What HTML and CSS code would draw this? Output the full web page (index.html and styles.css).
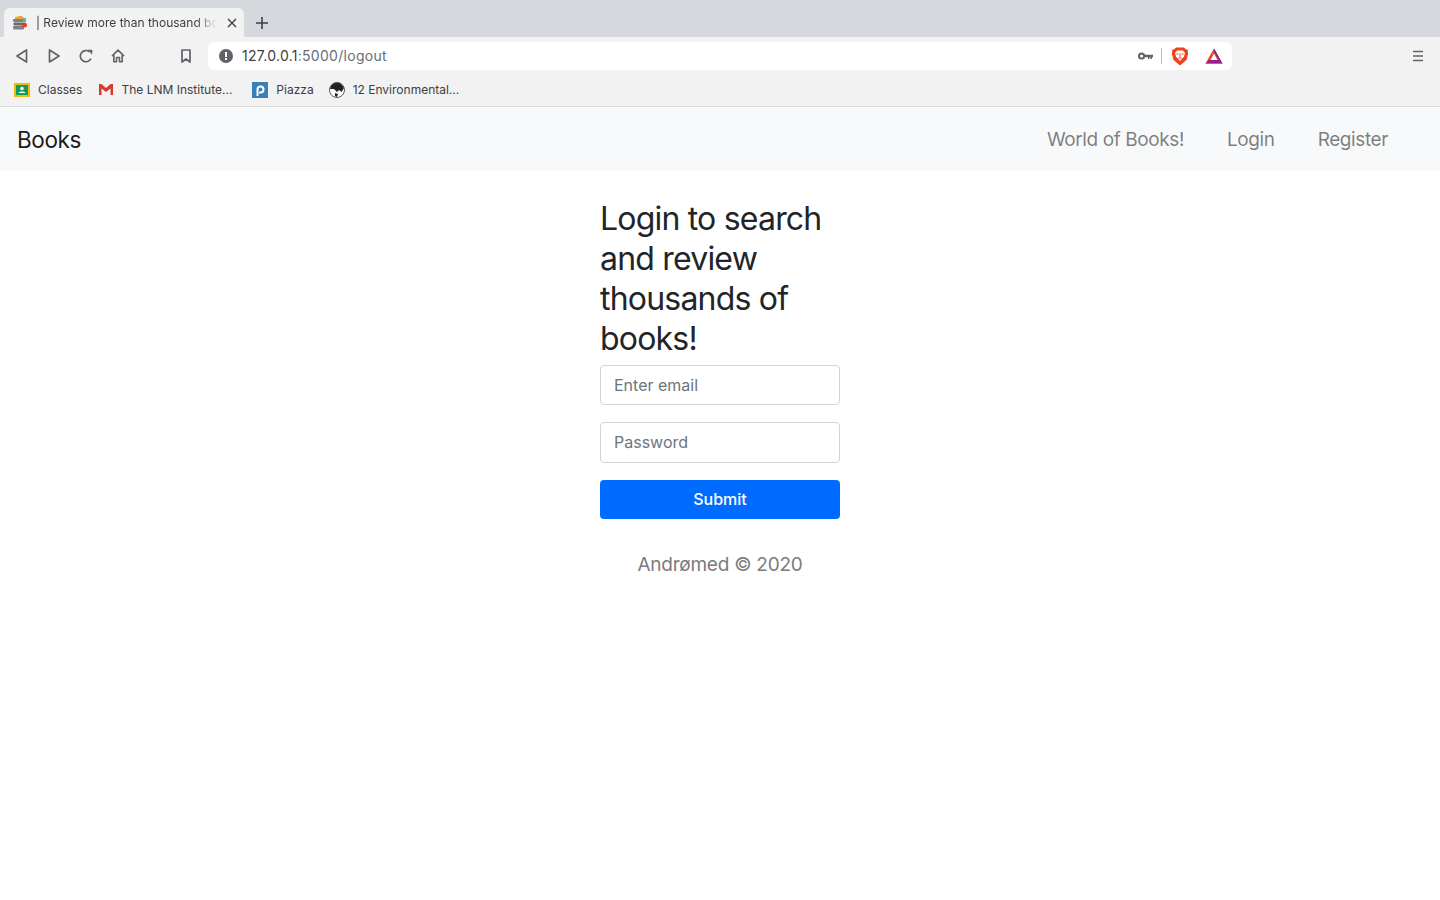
FILE: index.html
```html
<!DOCTYPE html>
<html lang="en">
<head>
<meta charset="utf-8">
<title>Review more than thousand books</title>
<link rel="stylesheet" href="styles.css">
</head>
<body>
<header class="chrome">
  <div class="tabstrip">
    <div class="tab">
      <svg class="favicon" width="16" height="16" viewBox="0 0 16 16">
        <path d="M3 2.500 Q5 .5 10 1 L12 3 L12 5 L3 5Z" fill="#e5a92c"/>
        <rect x="1" y="4" width="11" height="3" rx="1" fill="#7d8186"/>
        <rect x="1.500" y="7.500" width="11" height="3" rx="1" fill="#65696e"/>
        <rect x="1" y="11" width="11" height="3.500" rx="1" fill="#7d8186"/>
        <rect x="11" y="3" width="3" height="4" fill="#4fb6cf"/>
        <circle cx="12.500" cy="10" r="2.500" fill="#e8412a"/>
      </svg>
      <span class="tab-title">| Review more than thousand books</span>
      <svg class="tab-close" width="10" height="10" viewBox="0 0 10 10"><path d="M1 1 9 9M9 1 1 9" stroke="#3c4043" stroke-width="1.400" fill="none"/></svg>
    </div>
    <svg class="new-tab" width="12" height="12" viewBox="0 0 12 12"><path d="M6 0V12M0 6H12" stroke="#3c4043" stroke-width="1.600" fill="none"/></svg>
  </div>
  <div class="toolbar">
    <div class="nav-icons">
      <svg width="14" height="14" viewBox="0 0 14 14"><path d="M11.500 1V13L2 7Z" fill="none" stroke="#5f6368" stroke-width="1.700" stroke-linejoin="round"/></svg>
      <svg width="14" height="14" viewBox="0 0 14 14"><path d="M2.500 1V13L12 7Z" fill="none" stroke="#5f6368" stroke-width="1.700" stroke-linejoin="round"/></svg>
      <svg width="14" height="14" viewBox="0 0 14 14"><path d="M12 9.500A5.600 5.600 0 1 1 10.500 2.800" fill="none" stroke="#5f6368" stroke-width="1.700"/><path d="M9 .5 13.500 1 13 5.800Z" fill="#5f6368"/></svg>
      <svg width="14" height="14" viewBox="0 0 14 14"><path d="M1 7 7 1.200 13 7M2.800 5.500V12.800H5.500V8.500H8.500V12.800H11.200V5.500" fill="none" stroke="#5f6368" stroke-width="1.600" stroke-linejoin="round"/></svg>
    </div>
    <svg class="bookmark" width="12" height="14" viewBox="0 0 12 14"><path d="M2 1H10V13L6 10 2 13Z" fill="none" stroke="#5f6368" stroke-width="1.700" stroke-linejoin="round"/></svg>
    <div class="omnibox">
      <svg class="info" width="14" height="14" viewBox="0 0 14 14"><circle cx="7" cy="7" r="7" fill="#5f6368"/><rect x="6" y="3" width="2" height="5" fill="#fff"/><rect x="6" y="9" width="2" height="2" fill="#fff"/></svg>
      <span class="url"><span class="url-host">127.0.0.1</span>:5000/logout</span>
      <svg class="key" width="15" height="8" viewBox="0 0 15 8"><circle cx="3.600" cy="4" r="2.600" fill="none" stroke="#5f6368" stroke-width="2"/><path d="M6 2.800H15V5.200H14V7H12.500V5.200H11.500V7H10V5.200H6Z" fill="#5f6368"/></svg>
      <span class="omni-sep"></span>
      <svg class="brave" width="18" height="19" viewBox="0 0 18 19"><path d="M5 .5H13L14.500 2 17 3 16.800 5 17.200 6.500 15.500 13 9 18.500 2.500 13 .8 6.500 1.200 5 1 3 3.500 2Z" fill="#f1401d"/><path d="M6 3.500H12L14 6 13 9.500 9 14 5 9.500 4 6Z" fill="#fff"/><path d="M5.500 7H7.500M10.500 7H12.500M9 6.500V10M7.500 11H10.500" stroke="#f1401d" stroke-width="1" fill="none"/></svg>
      <svg class="bat" width="18" height="16" viewBox="0 0 18 16"><path d="M9 .5 17.500 15.500H.5Z" fill="#f1401d"/><path d="M.5 15.500 4 12H14L17.500 15.500Z" fill="#9e1f87"/><path d="M9 .5 17.500 15.500 14 12 9 4Z" fill="#662d91"/><path d="M9 5.500 12.500 12H5.500Z" fill="#fff"/></svg>
    </div>
    <svg class="menu" width="10" height="12" viewBox="0 0 10 12"><path d="M0 1.500H10M0 6H10M0 10.500H10" stroke="#5f6368" stroke-width="1.500" fill="none"/></svg>
  </div>
  <nav class="bookmarks">
    <a class="bm bm-classes">
      <svg width="16" height="14" viewBox="0 0 16 14"><rect width="16" height="14" fill="#f5b90d"/><rect x="2" y="2" width="12" height="10" fill="#0f9d58"/><circle cx="8" cy="5.500" r="1.800" fill="#fff"/><path d="M4.500 10C5 8 11 8 11.500 10Z" fill="#fff"/></svg>
      Classes
    </a>
    <a class="bm bm-gmail">
      <svg width="14" height="11" viewBox="0 0 14 11"><path d="M0 0H2.500L7 4 11.500 0H14V11H11.500V4.500L7 8 2.500 4.500V11H0Z" fill="#d93a2f"/></svg>
      The LNM Institute...
    </a>
    <a class="bm bm-piazza">
      <svg width="16" height="16" viewBox="0 0 16 16"><rect width="16" height="16" fill="#3a7fb8"/><path d="M5.500 14V7.500A3 3 0 1 1 8.500 10.500H7" fill="none" stroke="#fff" stroke-width="2"/></svg>
      Piazza
    </a>
    <a class="bm bm-env">
      <svg width="16" height="16" viewBox="0 0 16 16"><circle cx="8" cy="8" r="8" fill="#fff"/><path d="M4 1.500C6 .2 10 .2 12 1.500L15 6 12.500 10 10 8 8 10 5 7 1 7C1.500 4.500 2.500 2.500 4 1.500ZM6 11 9 12 8 15 6 14Z" fill="#222"/><circle cx="8" cy="8" r="7.500" fill="none" stroke="#555" stroke-width="1"/></svg>
      12 Environmental...
    </a>
  </nav>
</header>
<nav class="navbar">
  <a class="brand">Books</a>
  <ul class="nav-links">
    <li class="nav-link">World of Books!</li>
    <li class="nav-link">Login</li>
    <li class="nav-link">Register</li>
  </ul>
</nav>
<main class="login">
  <h1 class="login-title">Login to search and review thousands of books!</h1>
  <form class="login-form">
    <input class="field" type="email" placeholder="Enter email">
    <input class="field field-password" type="password" placeholder="Password">
    <button class="submit" type="button">Submit</button>
  </form>
  <p class="credit">Andrømed © 2020</p>
</main>
</body>
</html>
```
FILE: styles.css
```css
* { box-sizing: border-box; }
html, body { margin: 0; padding: 0; background: #fff; }
body { font-family: Inter, "Liberation Sans", sans-serif; color: #212529; height: 900px; overflow: hidden; }

.chrome { height: 107px; background: #f2f2f2; border-bottom: 1px solid #d8dade; font-family: Inter, Roboto, sans-serif; }
.tabstrip { height: 37px; background: #d5d8dd; display: flex; align-items: flex-end; padding-left: 4px; }
.tab { width: 240px; height: 29px; background: #f2f2f2; border-radius: 6px 6px 0 0; display: flex; align-items: center; padding: 0 7px 0 8px; }
.favicon { flex: none; }
.tab-title { margin-left: 8px; width: 182px; font-size: 12px; color: #3c4043; white-space: nowrap; overflow: hidden; -webkit-mask-image: linear-gradient(to right, #000 88%, transparent); mask-image: linear-gradient(to right, #000 88%, transparent); }
.tab-close { margin-left: 10px; flex: none; }
.new-tab { margin: 0 0 8px 12px; }

.toolbar { height: 38px; display: flex; align-items: center; padding-left: 15px; }
.nav-icons { display: flex; gap: 18px; width: 157px; }
.bookmark { flex: none; margin-left: 8px; }
.omnibox { width: 1024px; height: 28px; margin-left: 16px; background: #fff; border-radius: 6px; display: flex; align-items: center; padding-left: 11px; }
.info { flex: none; }
.url { margin: 0 0 2px 9px; font-size: 14px; letter-spacing: .28px; color: #6a6e73; flex: 1; }
.url-host { color: #3c4043; }
.key { flex: none; }
.omni-sep { width: 1px; height: 16px; background: #b9bbbe; margin-left: 8px; }
.brave { flex: none; margin-left: 9px; }
.bat { flex: none; margin: 0 9px 0 16px; }
.menu { flex: none; margin-left: 181px; }

.bookmarks { height: 31px; display: flex; align-items: center; padding: 0 0 2px 14px; font-size: 12px; color: #3c4043; }
.bm { display: flex; align-items: center; white-space: nowrap; }
.bm svg { flex: none; }
.bm-classes { gap: 8px; }
.bm-gmail { gap: 8px; margin-left: 17px; }
.bm-piazza { gap: 8px; margin-left: 20px; }
.bm-env { gap: 8px; margin-left: 15px; }

.navbar { height: 64px; background: #f8f9fa; display: flex; align-items: center; justify-content: space-between; padding: 0 52px 0 17px; }
.brand { font-size: 22.500px; letter-spacing: -.4px; color: rgba(0,0,0,.9); }
.nav-links { display: flex; list-style: none; margin: 0; padding: 0; gap: 43px; }
.nav-link { font-size: 19px; letter-spacing: -.4px; color: rgba(0,0,0,.5); }

.login { width: 240px; margin: 0 auto; padding-top: 28px; }
.login-title { margin: 0 0 6px; font-size: 32px; line-height: 40px; font-weight: 400; letter-spacing: -.8px; color: #212529; }
.login-form { display: flex; flex-direction: column; }
.field { width: 100%; height: 40px; padding: 0 13px; font: 400 16px Inter, sans-serif; color: #495057; background: #fff; border: 1px solid #ced4da; border-radius: 4px; margin-bottom: 17px; }
.field-password { height: 41px; padding-bottom: 2px; }
.field::placeholder { color: #6c757d; opacity: 1; }
.submit { height: 39px; padding: 0 0 2px; background: #006cff; border: 0; border-radius: 4px; color: #fff; font: 500 16px Inter, sans-serif; }
.credit { margin: 32px 0 0; text-align: center; font-size: 19px; letter-spacing: -.25px; line-height: 28px; color: #7b7b7b; }
```
